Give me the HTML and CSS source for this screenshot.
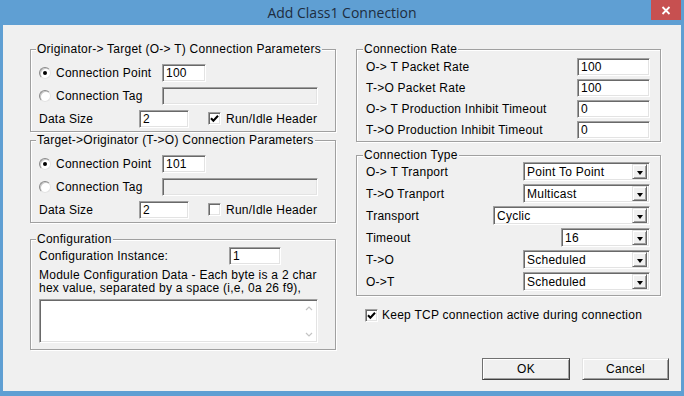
FILE: index.html
```html
<!DOCTYPE html>
<html lang="en">
<head>
  <meta charset="UTF-8">
  <title>Add Class1 Connection</title>
  <link rel="stylesheet" href="styles.css">
</head>
<body>

<div class="window">
  <div class="titlebar">
    <div class="title">Add Class1 Connection</div>
    <button class="close" type="button" aria-label="Close">
      <svg width="10" height="9" viewBox="0 0 10 9"><path d="M1.5 1L8.5 8M8.5 1L1.5 8" stroke="#fff" stroke-width="1.8" fill="none"/></svg>
    </button>
  </div>

  <div class="client">
    <div class="columns">

      <!-- left column -->
      <div class="col">
        <fieldset class="group params">
          <legend>Originator-&gt; Target (O-&gt; T) Connection Parameters</legend>
          <div class="row">
            <span class="radio on"></span><span class="rlabel">Connection Point</span>
            <div class="edit w44">100</div>
          </div>
          <div class="row">
            <span class="radio"></span><span class="rlabel">Connection Tag</span>
            <div class="edit off w156"></div>
          </div>
          <div class="row">
            <span class="dlabel">Data Size</span>
            <div class="edit w50">2</div>
            <span class="check on"><svg width="9" height="9" viewBox="0 0 9 9"><path d="M1 4.2L3.4 6.8L8 1.8" stroke="#000" stroke-width="2" fill="none"/></svg></span>
            <span>Run/Idle Header</span>
          </div>
        </fieldset>

        <fieldset class="group params second">
          <legend>Target-&gt;Originator (T-&gt;O) Connection Parameters</legend>
          <div class="row">
            <span class="radio on"></span><span class="rlabel">Connection Point</span>
            <div class="edit w44">101</div>
          </div>
          <div class="row">
            <span class="radio"></span><span class="rlabel">Connection Tag</span>
            <div class="edit off w156"></div>
          </div>
          <div class="row">
            <span class="dlabel">Data Size</span>
            <div class="edit w50">2</div>
            <span class="check"></span>
            <span>Run/Idle Header</span>
          </div>
        </fieldset>

        <fieldset class="group config">
          <legend>Configuration</legend>
          <div class="row">
            <span class="ilabel">Configuration Instance:</span>
            <div class="edit w52">1</div>
          </div>
          <p class="hint">Module Configuration Data - Each byte is a 2 char<br>hex value, separated by a space (i,e, 0a 26 f9),</p>
          <div class="edit memo">
            <div class="vscroll">
              <svg width="8" height="5" viewBox="0 0 8 5"><path d="M1 4L4 1L7 4" stroke="#c4c4c4" stroke-width="1.2" fill="none"/></svg>
              <svg width="8" height="5" viewBox="0 0 8 5"><path d="M1 1L4 4L7 1" stroke="#c4c4c4" stroke-width="1.2" fill="none"/></svg>
            </div>
          </div>
        </fieldset>
      </div>

      <!-- right column -->
      <div class="col">
        <fieldset class="group rate">
          <legend>Connection Rate</legend>
          <div class="row"><span>O-&gt; T Packet Rate</span><div class="edit w73">100</div></div>
          <div class="row"><span>T-&gt;O Packet Rate</span><div class="edit w73">100</div></div>
          <div class="row"><span>O-&gt; T Production Inhibit Timeout</span><div class="edit w73">0</div></div>
          <div class="row"><span>T-&gt;O Production Inhibit Timeout</span><div class="edit w73">0</div></div>
        </fieldset>

        <fieldset class="group type">
          <legend>Connection Type</legend>
          <div class="row"><span>O-&gt; T Tranport</span><div class="combo w127"><span class="val">Point To Point</span><span class="arrow"></span></div></div>
          <div class="row"><span>T-&gt;O Tranport</span><div class="combo w127"><span class="val">Multicast</span><span class="arrow"></span></div></div>
          <div class="row"><span>Transport</span><div class="combo w157"><span class="val">Cyclic</span><span class="arrow"></span></div></div>
          <div class="row"><span>Timeout</span><div class="combo w89"><span class="val">16</span><span class="arrow"></span></div></div>
          <div class="row"><span>T-&gt;O</span><div class="combo w127"><span class="val">Scheduled</span><span class="arrow"></span></div></div>
          <div class="row"><span>O-&gt;T</span><div class="combo w127"><span class="val">Scheduled</span><span class="arrow"></span></div></div>
        </fieldset>

        <div class="keep">
          <span class="check on"><svg width="9" height="9" viewBox="0 0 9 9"><path d="M1 4.2L3.4 6.8L8 1.8" stroke="#000" stroke-width="2" fill="none"/></svg></span>
          <span>Keep TCP connection active during connection</span>
        </div>
      </div>

    </div>

    <div class="buttons">
      <button class="btn ok" type="button">OK</button>
      <button class="btn cancel" type="button">Cancel</button>
    </div>
  </div>
</div>

</body>
</html>
```

FILE: styles.css
```css
* {
  box-sizing: border-box;
}

html, body {
  margin: 0;
}

body {
  width: 684px;
  height: 396px;
  overflow: hidden;
  background: #5f9fd3;
  font-family: "Liberation Sans", Arial, sans-serif;
  font-size: 12px;
  letter-spacing: 0.25px;
  color: #000;
}

.window {
  display: flex;
  flex-direction: column;
  height: 396px;
}

/* title bar */
.titlebar {
  height: 25px;
  display: grid;
  grid-template-columns: 1fr auto 1fr;
  align-items: start;
}

.title {
  grid-column: 2;
  font-family: "Open Sans", sans-serif;
  font-size: 14px;
  letter-spacing: 0;
  line-height: 25px;
  color: #1d2d3f;
}

.close {
  grid-column: 3;
  justify-self: end;
  margin-right: 3px;
  width: 30px;
  height: 20px;
  padding: 0;
  border: none;
  background: #c75050;
  display: flex;
  align-items: center;
  justify-content: center;
}

/* dialog body */
.client {
  margin: 0 3px;
  height: 366px;
  background: #f0f0f0;
  padding: 17px 12px 0 27px;
}

.columns {
  display: grid;
  grid-template-columns: 306px 305px;
  column-gap: 20px;
  align-items: start;
}

.group {
  margin: 0;
  min-width: 0;
  border: 1px solid #a0a0a0;
  box-shadow: inset 1px 1px #fff, 1px 1px #fff;
}

.group legend {
  padding: 0 1px;
  margin-left: -3px;
  line-height: 14px;
  white-space: nowrap;
  background: #f0f0f0;
}

.row {
  display: flex;
  align-items: center;
  height: 19px;
}

/* left groups */
.params {
  padding: 7px 17px 3px 8px;
}

.params .row + .row {
  margin-top: 4px;
}

.params.second {
  margin-top: 1px;
}

.rlabel {
  width: 106px;
}

.dlabel {
  width: 100px;
}

.ilabel {
  width: 190px;
}

.config {
  margin-top: 9px;
  padding: 0 17px 6px 8px;
}

.hint {
  margin: 4px 0 0;
  line-height: 13px;
}

/* right groups */
.rate {
  padding: 1px 10px 2px 9px;
}

.rate .row,
.type .row {
  justify-content: space-between;
}

.rate .row + .row {
  margin-top: 2px;
}

.type {
  margin-top: 6px;
  padding: 0 10px 4px 9px;
}

.type .row + .row {
  margin-top: 3px;
}

.keep {
  display: flex;
  align-items: center;
  gap: 4px;
  margin-top: 12px;
  padding-left: 9px;
}

/* controls */
.edit {
  height: 18px;
  background: #fff;
  border: 1px solid;
  border-color: #a0a0a0 #fff #fff #a0a0a0;
  box-shadow: inset 1px 1px #696969, inset -1px -1px #e3e3e3;
  padding: 0 3px;
  line-height: 16px;
}

.edit.off {
  background: #f0f0f0;
}

.edit.memo {
  margin-top: 4px;
  height: 44px;
  display: flex;
  justify-content: flex-end;
  padding: 0;
}

.vscroll {
  width: 17px;
  display: flex;
  flex-direction: column;
  justify-content: space-between;
  align-items: center;
  padding: 6px 0 5px;
}

.w44 { width: 44px; }
.w50 { width: 50px; }
.w52 { width: 52px; }
.w73 { width: 73px; }
.w89 { width: 89px; }
.w127 { width: 127px; }
.w156 { width: 156px; }
.w157 { width: 157px; }

.combo {
  height: 19px;
  display: flex;
  align-items: center;
  background: #fff;
  border: 1px solid;
  border-color: #a0a0a0 #fff #fff #a0a0a0;
  box-shadow: inset 1px 1px #696969, inset -1px -1px #e3e3e3;
  padding: 0 2px 0 3px;
}

.combo .val {
  flex: 1;
}

.combo .arrow {
  width: 15px;
  height: 15px;
  background: #f0f0f0;
  border: 1px solid;
  border-color: #e3e3e3 #696969 #696969 #e3e3e3;
  box-shadow: inset 1px 1px #fff, inset -1px -1px #a0a0a0;
  display: flex;
  align-items: center;
  justify-content: center;
}

.combo .arrow::after {
  content: "";
  margin-top: 2px;
  border-left: 3.5px solid transparent;
  border-right: 3.5px solid transparent;
  border-top: 4px solid #000;
}

.radio {
  width: 12px;
  height: 12px;
  margin-right: 5px;
  border-radius: 50%;
  background: #fff;
  border: 1px solid;
  border-color: #8a8a8a #e3e3e3 #e3e3e3 #8a8a8a;
  box-shadow: inset 1px 1px #c8c8c8;
  display: flex;
  align-items: center;
  justify-content: center;
}

.radio.on::after {
  content: "";
  width: 4px;
  height: 4px;
  border-radius: 50%;
  background: #000;
}

.check {
  width: 13px;
  height: 13px;
  margin: 0 5px 0 19px;
  background: #fff;
  border: 1px solid;
  border-color: #a0a0a0 #fff #fff #a0a0a0;
  box-shadow: inset 1px 1px #696969, inset -1px -1px #e3e3e3;
  display: flex;
  align-items: center;
  justify-content: center;
}

.keep .check {
  margin: 0;
}

/* buttons */
.buttons {
  display: flex;
  justify-content: flex-end;
  gap: 12px;
  margin-top: 8px;
}

.btn {
  height: 22px;
  padding: 0;
  font-family: "Liberation Sans", Arial, sans-serif;
  font-size: 12px;
  letter-spacing: 0.25px;
  color: #000;
  background: #f0f0f0;
  border: 1px solid;
  border-color: #e3e3e3 #505050 #505050 #e3e3e3;
  box-shadow: inset 1px 1px #fff, inset -1px -1px #a0a0a0;
}

.ok {
  width: 88px;
  border-color: #707070 #404040 #404040 #707070;
}

.cancel {
  width: 87px;
}
```
